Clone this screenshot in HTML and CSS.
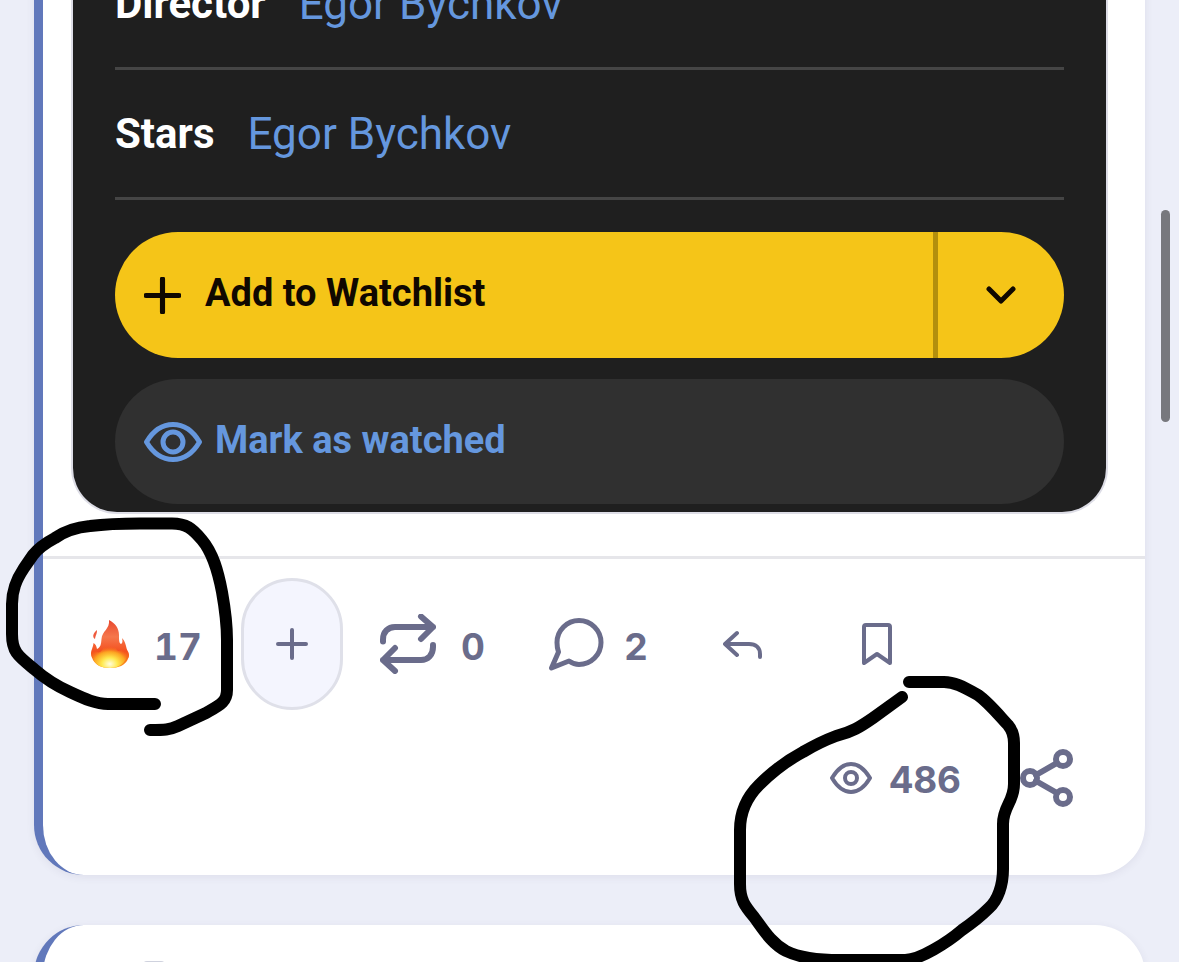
FILE: index.html
```html
<!DOCTYPE html>
<html lang="en">
<head>
<meta charset="utf-8">
<meta name="viewport" content="width=device-width, initial-scale=1">
<title>Post</title>
<link rel="stylesheet" href="styles.css">
</head>
<body>
<main class="feed">
  <article class="card card-first">
    <div class="media">
      <div class="credit"><b>Director</b><a href="#">Egor Bychkov</a></div>
      <div class="credit"><b>Stars</b><a href="#">Egor Bychkov</a></div>
      <div class="watchlist">
        <button class="watch-add" type="button">
          <svg class="watch-plus" viewBox="0 0 36 36" aria-hidden="true"><path d="M18 2v32M2 18h32"/></svg>
          <span>Add to Watchlist</span>
        </button>
        <button class="watch-more" type="button" aria-label="More lists">
          <svg class="watch-chevron" viewBox="0 0 30 18" aria-hidden="true"><path d="M3 3l12 12L27 3"/></svg>
        </button>
      </div>
      <button class="watched" type="button">
        <svg class="watched-eye" viewBox="0 0 58 40" aria-hidden="true"><path d="M2.500 20C9 9 18 2.500 29 2.500S49 9 55.500 20C49 31 40 37.500 29 37.500S9 31 2.500 20z"/><circle cx="29" cy="20" r="10"/></svg>
        <span>Mark as watched</span>
      </button>
    </div>
    <footer class="actions">
      <div class="row">
        <button class="action like" type="button">
          <svg class="fire" viewBox="0 0 40 50" aria-hidden="true">
            <defs>
              <linearGradient id="flame" x1="0" y1="0" x2="0" y2="1">
                <stop offset="0" stop-color="#e9482f"/><stop offset=".35" stop-color="#f5774c"/><stop offset=".65" stop-color="#f4511f"/><stop offset="1" stop-color="#fb9a1b"/>
              </linearGradient>
              <radialGradient id="glow" cx=".5" cy=".85" r=".65">
                <stop offset="0" stop-color="#fffde0"/><stop offset=".35" stop-color="#ffe94f"/><stop offset=".7" stop-color="#fdb022" stop-opacity=".85"/><stop offset="1" stop-color="#f7621e" stop-opacity="0"/>
              </radialGradient>
            </defs>
            <path fill="url(#flame)" d="M19 1c6 3 10 8 10 15 0 5 0 8 2 9 2-1 1.500-4 1-6 3 3 3.500 6 4.500 10 .5 3 3 4 2.500 8 0 2-1 2-1.500 4C35 46 29 49 20 49S6 46 3 41C2 38 1 38 1 35c0-4 2-6 2.500-11 2 1 3 3 3.500 6 4-2 4-5 4.500-10C12 12 20 10 19 1z"/>
            <path fill="#ef5a3c" d="M7 11c0 4-1 4-2 9-3-2-2-6 2-9z"/>
            <path fill="url(#glow)" d="M20 22c5 2 5 8 8 10 3 0 5-2 7-4 1 6 3 7 1 12-3 6-9 9-16 9S4 46 3 39c-1-4 0-6 1-9 2 3 4 4 6 3 4-2 4-9 10-11z"/>
          </svg>
          <span>17</span>
        </button>
        <button class="react" type="button" aria-label="Add reaction">
          <svg class="react-plus" viewBox="0 0 32 32" aria-hidden="true"><path d="M16 2v28M2 16h28"/></svg>
        </button>
        <button class="action repost" type="button">
          <svg class="icon-repost" viewBox="0 0 56 60" aria-hidden="true"><path d="M3 27.500v-2C3 18 8 13 15 13h38M41 2.500L53 13 41 25M53 31v2c0 8-5 13-12 13H3M15 34L3 46l12 11"/></svg>
          <span>0</span>
        </button>
        <button class="action comment" type="button">
          <svg class="icon-comment" viewBox="0 0 56 54" aria-hidden="true"><path d="M3.500 51L10.500 35Q9 31 9 25.500A22 22 0 1 1 31 47.500Q26 47.500 21 44z"/></svg>
          <span>2</span>
        </button>
        <button class="action reply" type="button" aria-label="Reply">
          <svg class="icon-reply" viewBox="0 0 40 30" aria-hidden="true"><path d="M14 4L2 15l12 11M3 15h23c7 0 11 4 11 10v3"/></svg>
        </button>
        <button class="action save" type="button" aria-label="Bookmark">
          <svg class="icon-save" viewBox="0 0 32 44" aria-hidden="true"><path d="M5 3h22q2 0 2 2v36L16 32 3 41V5q0-2 2-2z"/></svg>
        </button>
      </div>
      <div class="row row-end">
        <div class="action views">
          <svg class="icon-eye" viewBox="0 0 42 32" aria-hidden="true"><path d="M2 16C8 6 14 2 21 2s13 4 19 14C34 26 28 30 21 30S8 26 2 16z"/><circle cx="21" cy="16" r="6"/></svg>
          <span>486</span>
        </div>
        <button class="action share" type="button" aria-label="Share">
          <svg class="icon-share" viewBox="0 0 54 58" aria-hidden="true"><circle cx="10" cy="29" r="7"/><circle cx="43" cy="10" r="7"/><circle cx="43" cy="48" r="7"/><path d="M16 26l21-12M16 32l21 12"/></svg>
        </button>
      </div>
    </footer>
  </article>
  <article class="card card-next"><span class="stub"></span></article>
</main>
<div class="scroll-thumb"></div>
<svg class="marks" viewBox="0 0 1179 962" aria-hidden="true">
  <path d="M155 704H108C96 704 85 699 70 692Q50 683 34 669C18 656 12 652 12 634V604C12 590 16 580 24 568L33 555Q40 546 55 538Q69 528 90 526Q110 523.500 140 523.500H172C186 523.500 192 528 202 540C213 553 218 571 222 592Q227 620 227 640V690C227 702 220 705 206 713L178 726C169 730 165 730 150 730"/>
  <path d="M909 682H944C954 682 962 686 978 695C988 702 997 713 1008 725Q1014 732 1014 743V784C1014 802 1003 806 1003 824V869C1003 885 998 900 989 908Q978 919 962 930C948 942 920 960 905 960H840C817 960 800 958 786 951C771 943 763 929 754 917C745 906 740 900 740 884V830C740 811 747 797 759 785C773 771 788 760 803 752Q820 742 836 736C852 732 860 727 873 718L902 697"/>
</svg>
</body>
</html>
```

FILE: styles.css
```css
* { box-sizing: border-box; }

body {
  margin: 0;
  height: 100vh;
  overflow: hidden;
  position: relative;
  background: #eceef8;
  color: #6a6c8b;
  font-family: Inter, "Liberation Sans", sans-serif;
}

button {
  margin: 0;
  padding: 0;
  border: 0;
  background: none;
  color: inherit;
  font: inherit;
  cursor: pointer;
}

svg {
  display: block;
  flex: none;
  fill: none;
  stroke: currentColor;
  stroke-linecap: round;
  stroke-linejoin: round;
}

.feed {
  display: flex;
  flex-direction: column;
  gap: 50px;
  padding: 0 34px;
}

.card {
  border-left: 9px solid #6178bb;
  border-radius: 50px;
  background: #fff;
  box-shadow: 0 2px 8px rgba(60, 50, 90, 0.08);
}

.card-first {
  margin-top: -60px;
  border-top-left-radius: 0;
  border-top-right-radius: 0;
}

.card-next { padding: 36px 100px; }

.stub {
  display: block;
  width: 22px;
  height: 30px;
  border-radius: 4px;
  background: #cfd2de;
}

.media {
  margin: 0 37px 0 28px;
  padding: 0 42px 8px;
  border: 2px solid #dddde6;
  border-top: 0;
  border-radius: 0 0 46px 46px;
  background: #1f1f1f;
  font-family: Roboto, "Liberation Sans", sans-serif;
}

.credit {
  display: flex;
  align-items: center;
  gap: 33px;
  height: 130px;
  border-bottom: 3px solid #454545;
  color: #fff;
  font-size: 42px;
}

.credit a {
  color: #6597de;
  font-size: 44px;
  text-decoration: none;
}

.watchlist {
  display: flex;
  height: 126px;
  margin: 32px 0 21px;
  border-radius: 63px;
  overflow: hidden;
  background: #f5c518;
  color: #100800;
}

.watch-add {
  display: flex;
  flex: 1;
  align-items: center;
  gap: 24px;
  padding-left: 29px;
  font-size: 38px;
  font-weight: 700;
}

.watch-add span,
.watched span { padding-bottom: 4px; }

.watch-more {
  display: flex;
  align-items: center;
  justify-content: center;
  width: 131px;
  border-left: 5px solid #b38f0d;
}

.watch-plus { width: 37px; height: 37px; stroke-width: 5; }
.watch-chevron { width: 30px; height: 18px; stroke-width: 5; }

.watched {
  display: flex;
  align-items: center;
  gap: 13px;
  width: 100%;
  height: 125px;
  padding-left: 29px;
  border-radius: 63px;
  background: #303030;
  color: #6597de;
  font-size: 38px;
  font-weight: 700;
}

.watched-eye { width: 58px; height: 40px; stroke-width: 5; }

.actions {
  margin-top: 42px;
  padding: 19px 71px 30px 47px;
  border-top: 3px solid #e6e6ea;
}

.row {
  display: flex;
  align-items: center;
  height: 132px;
}

.row-end { justify-content: flex-end; height: 135px; }

.action {
  display: flex;
  align-items: center;
  gap: 25px;
  font-size: 37px;
  font-weight: 700;
  font-variant-numeric: tabular-nums;
}

.action span { padding-top: 4px; }

.like { width: 151px; gap: 24px; }
.fire { width: 40px; height: 50px; stroke: none; }

.react {
  display: flex;
  align-items: center;
  justify-content: center;
  width: 102px;
  height: 132px;
  margin-right: 37px;
  border: 3px solid #dfe0e9;
  border-radius: 51px;
  background: #f4f5fe;
}

.react-plus { width: 32px; height: 32px; stroke-width: 4; }
.repost { width: 168px; }
.icon-repost { width: 56px; height: 60px; stroke-width: 6; }
.comment { width: 175px; gap: 20px; }
.icon-comment { width: 56px; height: 54px; stroke-width: 5; }
.reply { width: 138px; }
.icon-reply { width: 40px; height: 30px; stroke-width: 4; }
.icon-save { width: 32px; height: 44px; stroke-width: 4; }
.views { gap: 17px; margin-right: 59px; }
.icon-eye { width: 42px; height: 32px; stroke-width: 4; }
.icon-share { width: 54px; height: 58px; stroke-width: 6; }

.scroll-thumb {
  position: absolute;
  top: 210px;
  right: 9px;
  width: 9px;
  height: 212px;
  border-radius: 5px;
  background: #77787d;
}

.marks {
  position: absolute;
  top: 0;
  left: 0;
  width: 1179px;
  color: #000;
  stroke-width: 12;
  pointer-events: none;
}
```
